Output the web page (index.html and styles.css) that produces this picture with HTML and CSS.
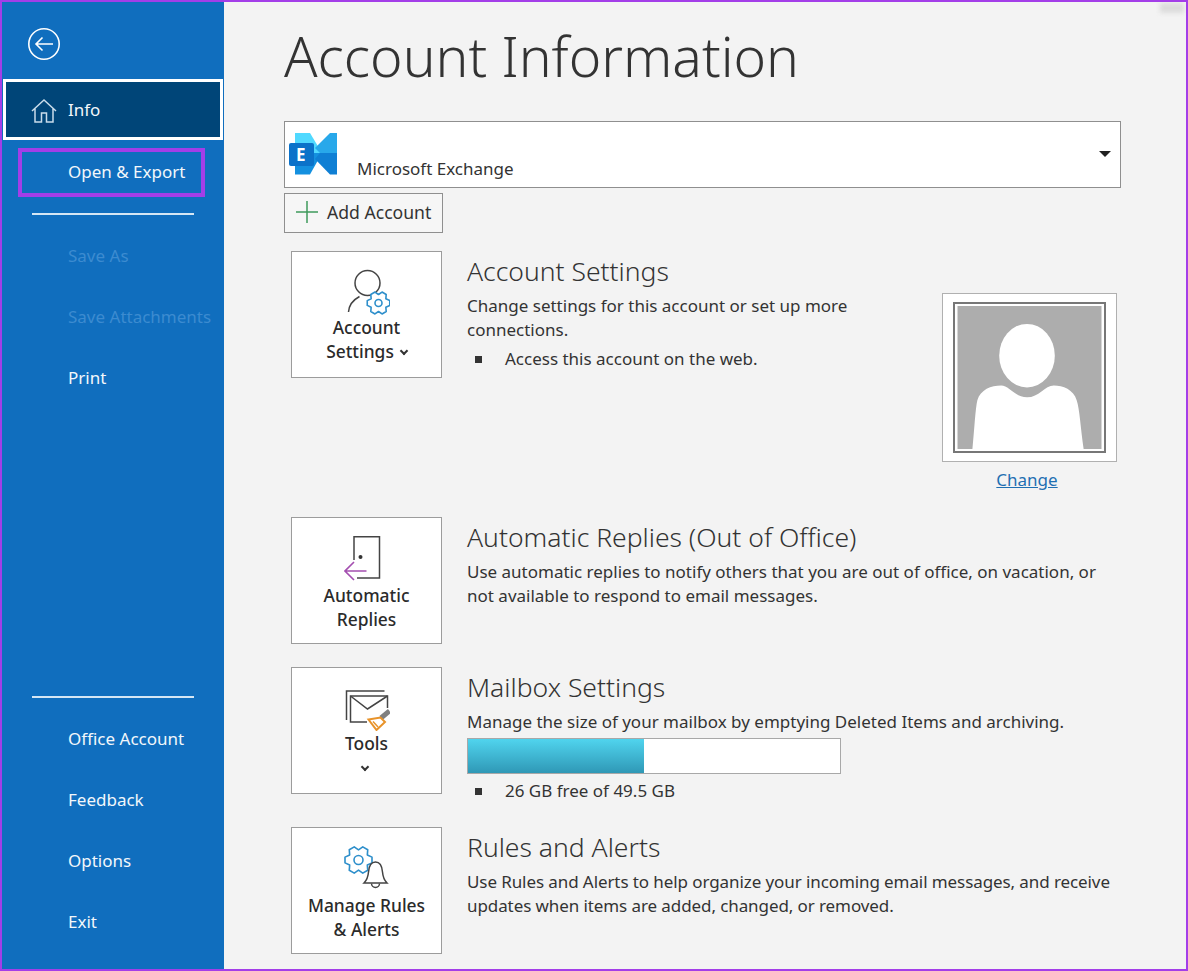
FILE: index.html
```html
<!DOCTYPE html>
<html lang="en">
<head>
    <meta charset="UTF-8">
    <meta name="viewport" content="width=device-width, initial-scale=1.0">
    <title>Account Information</title>
    <link rel="stylesheet" href="styles.css">
</head>
<body>
<div class="frame">
    <div class="side">
        <div class="back">
            <svg width="34" height="34" viewBox="0 0 34 34" fill="none" stroke="#fff" stroke-width="1.6">
                <circle cx="17" cy="17" r="15.2"/>
                <path d="M26 17H9M15.5 10.5L9 17l6.5 6.5"/>
            </svg>
        </div>
        <div class="item selected">
            <svg class="home" width="26" height="26" viewBox="0 0 26 26" fill="none" stroke="#c9dcea" stroke-width="1.5">
                <path d="M1 13L13 2l12 11M4 10.5V24h6.5v-9h5v9H22V10.5"/>
            </svg>
            Info
        </div>
        <div class="item open">Open &amp; Export</div>
        <div class="line"></div>
        <div class="item off">Save As</div>
        <div class="item off">Save Attachments</div>
        <div class="item">Print</div>
        <div class="spacer"></div>
        <div class="line"></div>
        <div class="item">Office Account</div>
        <div class="item">Feedback</div>
        <div class="item">Options</div>
        <div class="item">Exit</div>
    </div>

    <div class="main">
        <h1 class="title">Account Information</h1>

        <div class="account">
            <svg class="exch" width="48" height="44" viewBox="0 0 48 44">
                <path d="M6 1H21L33 21H6z" fill="#50d9ff"/>
                <path d="M6 21H33L21 42.500H6z" fill="#1490df"/>
                <path d="M41 1H48V21H31L26 16z" fill="#28a8ea"/>
                <path d="M31 21H48V42.500H41L26 27z" fill="#0f7fd4"/>
                <rect x="0" y="11" width="25" height="23" rx="2" fill="#0b72c9"/>
                <text x="7" y="28.500" class="e">E</text>
            </svg>
            <span class="acc-name">Microsoft Exchange</span>
            <span class="caret"></span>
        </div>

        <div class="add">
            <svg width="24" height="24" viewBox="0 0 24 24" stroke="#3f9a5c" stroke-width="1.5"><path d="M12 1v22M1 12h22"/></svg>
            Add Account
        </div>

        <div class="row row-account">
            <div class="btn">
                <svg class="icon icon-flush" width="46" height="46" viewBox="0 0 46 46" fill="none">
                    <circle cx="23.500" cy="14" r="12.500" stroke="#444" stroke-width="1.5"/>
                    <path d="M4.500 43C5 36 9 31 15.500 27.500" stroke="#444" stroke-width="1.5"/>
                    <path transform="translate(34.500 34)" d="M11.250-2.390L11.250 2.390 7.360 4.250 7.690 8.550 3.550 10.940 0 8.500-3.550 10.940-7.690 8.550-7.360 4.250-11.250 2.390-11.250-2.390-7.360-4.250-7.690-8.550-3.550-10.940 0-8.500 3.550-10.940 7.690-8.550 7.360-4.250Z" stroke="#2e8fcb" stroke-width="1.6" stroke-linejoin="round" fill="#fff"/>
                    <circle cx="34.500" cy="34" r="3.500" stroke="#2e8fcb" stroke-width="1.6"/>
                </svg>
                <span>Account</span>
                <span>Settings<i class="chev"></i></span>
            </div>
            <div class="info">
                <h2>Account Settings</h2>
                <p>Change settings for this account or set up more<br>connections.</p>
                <div class="bullet"><b></b>Access this account on the web.</div>
            </div>
            <div class="photo">
                <div class="pic">
                    <svg width="145" height="144" viewBox="0 0 145 144">
                        <rect width="145" height="144" fill="#adadad"/>
                        <ellipse cx="70" cy="50" rx="28" ry="32" fill="#fff"/>
                        <path d="M15 144c2-20 3-41 5-49 3-11 14-15 24-15 8 0 14 12 26 12s18-12 27-12c9 0 20 4 23 15 3 9 4 29 7 49z" fill="#fff"/>
                    </svg>
                </div>
                <a class="change">Change</a>
            </div>
        </div>

        <div class="row row-replies">
            <div class="btn">
                <svg class="icon" width="46" height="46" viewBox="0 0 46 46" fill="none">
                    <path d="M10 25V1.750H35.500V43H13" stroke="#444" stroke-width="1.5"/>
                    <circle cx="16.500" cy="22" r="2" fill="#333"/>
                    <path d="M22.500 36H1M10 27L1 36l9 9" stroke="#a44fb0" stroke-width="1.6"/>
                </svg>
                <span>Automatic</span>
                <span>Replies</span>
            </div>
            <div class="info">
                <h2>Automatic Replies (Out of Office)</h2>
                <p>Use automatic replies to notify others that you are out of office, on vacation, or<br>not available to respond to email messages.</p>
            </div>
        </div>

        <div class="row row-mailbox">
            <div class="btn">
                <svg class="icon icon-flush" width="46" height="46" viewBox="0 0 46 46" fill="none">
                    <path d="M2.500 35V6H40.500" stroke="#444" stroke-width="1.5"/>
                    <path d="M23 37H6.500V11H43.500V23" stroke="#444" stroke-width="1.5"/>
                    <path d="M6.500 11L23.500 24 43.500 11" stroke="#444" stroke-width="1.5"/>
                    <path d="M45.500 26L37 33" stroke="#808080" stroke-width="5"/>
                    <path d="M24.500 34.500L36.500 32.500 41 37 32.500 45z" fill="#fff" stroke="#e8932a" stroke-width="2"/>
                    <path d="M29 36.500L34 42" stroke="#e8932a" stroke-width="1.5"/>
                </svg>
                <span>Tools</span>
                <span class="chev-line"><i class="chev"></i></span>
            </div>
            <div class="info">
                <h2>Mailbox Settings</h2>
                <p>Manage the size of your mailbox by emptying Deleted Items and archiving.</p>
                <div class="bar"><div class="fill" style="width: 47.2%"></div></div>
                <div class="bullet bullet-free"><b></b>26 GB free of 49.5 GB</div>
            </div>
        </div>

        <div class="row row-rules">
            <div class="btn">
                <svg class="icon" width="46" height="46" viewBox="0 0 46 46" fill="none">
                    <path transform="translate(14.500 15) scale(1.200)" d="M11.250-2.390L11.250 2.390 7.360 4.250 7.690 8.550 3.550 10.940 0 8.500-3.550 10.940-7.690 8.550-7.360 4.250-11.250 2.390-11.250-2.390-7.360-4.250-7.690-8.550-3.550-10.940 0-8.500 3.550-10.940 7.690-8.550 7.360-4.250Z" stroke="#2e8fcb" stroke-width="1.350" stroke-linejoin="round"/>
                    <circle cx="14.500" cy="15" r="4.500" stroke="#2e8fcb" stroke-width="1.600"/>
                    <path d="M20 38c3-3 4-5 4.500-11 .5-6 3-10 7-10s6.500 4 7 10c.5 6 1.500 8 4.500 11z" stroke="#444" stroke-width="1.500" fill="#fff"/>
                    <path d="M27.500 38.500a4 4 0 0 0 8 0" stroke="#444" stroke-width="1.500"/>
                </svg>
                <span>Manage Rules</span>
                <span>&amp; Alerts</span>
            </div>
            <div class="info">
                <h2>Rules and Alerts</h2>
                <p class="tight">Use Rules and Alerts to help organize your incoming email messages, and receive<br>updates when items are added, changed, or removed.</p>
            </div>
        </div>
    </div>
    <div class="smudge"></div>
</div>
</body>
</html>
```

FILE: styles.css
```css
*{
    box-sizing: border-box;
}
body{
    margin: 0;
    font-family: "Noto Sans", "Open Sans", sans-serif;
    color: #333;
}
.frame{
    position: relative;
    width: 1188px;
    height: 971px;
    border: 2px solid #a33ee8;
    background: #f3f3f3;
    display: flex;
    overflow: hidden;
}

/* left menu */
.side{
    width: 222px;
    flex-shrink: 0;
    background: #106ebe;
    color: #f2f7fb;
    display: flex;
    flex-direction: column;
    padding-bottom: 17px;
    font-size: 17px;
}
.back{
    height: 77px;
    padding: 25px 0 0 25px;
}
.item{
    height: 61px;
    display: flex;
    align-items: center;
    padding-left: 66px;
    flex-shrink: 0;
}
.selected{
    position: relative;
    margin: 0 0 0 1px;
    padding-left: 62px;
    background: #004578;
    border: 3px solid #fff;
    width: 220px;
}
.home{
    position: absolute;
    left: 25px;
    top: 16px;
}
.open{
    height: 49px;
    margin: 8px 19px 6px 16px;
    padding: 0 0 3px 46px;
    border: 4px solid #a33ee8;
}
.line{
    height: 2px;
    margin: 10px 30px;
    background: #d5e6f4;
    flex-shrink: 0;
}
.off{
    color: #3c8bd0;
}
.spacer{
    flex: 1;
}

/* right side */
.main{
    flex: 1;
    padding: 0 65px 0 60px;
}
.title{
    margin: 17px 0 0 0;
    height: 82px;
    font-size: 55.200px;
    line-height: 74px;
    font-weight: 300;
    color: #333;
}
.account{
    margin-top: 20px;
    height: 67px;
    background: #fff;
    border: 1px solid #8f8f8f;
    display: flex;
    align-items: flex-start;
    padding: 10px 9px 0 4px;
}
.exch{
    flex-shrink: 0;
}
.e{
    font-size: 17px;
    font-weight: 700;
    fill: #fff;
}
.acc-name{
    margin: 25px 0 0 20px;
    font-size: 17px;
    flex: 1;
}
.caret{
    margin-top: 19px;
    border-left: 6px solid transparent;
    border-right: 6px solid transparent;
    border-top: 6px solid #222;
}
.add{
    margin-top: 5px;
    width: 159px;
    height: 40px;
    border: 1px solid #8f8f8f;
    background: #f6f6f6;
    display: flex;
    align-items: center;
    gap: 8px;
    padding: 0 0 2px 10px;
    font-size: 17.600px;
}
.row{
    display: flex;
    margin-left: 7px;
    align-items: flex-start;
}
.row-account{
    margin-top: 18px;
    height: 266px;
}
.row-replies{
    height: 150px;
}
.row-mailbox{
    height: 160px;
}
.btn{
    width: 151px;
    height: 127px;
    flex-shrink: 0;
    background: #fff;
    border: 1px solid #9c9c9c;
    display: flex;
    flex-direction: column;
    align-items: center;
    font-size: 17.400px;
    font-weight: 500;
    line-height: 24px;
    color: #2b2b2b;
    padding-top: 17px;
}
.icon{
    margin-bottom: 2px;
    flex-shrink: 0;
}
.icon-flush{
    margin-bottom: 0;
}
.chev{
    display: inline-block;
    width: 6px;
    height: 6px;
    border-right: 2px solid #333;
    border-bottom: 2px solid #333;
    transform: rotate(45deg);
    margin: 0 0 4px 7px;
}
.chev-line{
    margin-left: -11px;
}
.info{
    flex: 1;
    margin-left: 25px;
    font-size: 17px;
}
.info h2{
    margin: 2px 0 5px 0;
    height: 36px;
    font-size: 26.500px;
    line-height: 36px;
    font-weight: 300;
}
.info p{
    margin: 0;
    line-height: 24px;
}
.info .tight{
    letter-spacing: -0.09px;
}
.bullet{
    display: flex;
    align-items: center;
    margin-top: 5px;
    line-height: 24px;
}
.bullet b{
    width: 7px;
    height: 7px;
    background: #333;
    margin: 0 23px 0 8px;
}
.bar{
    margin-top: 4px;
    width: 374px;
    height: 36px;
    background: #fff;
    border: 1px solid #a8a8a8;
}
.fill{
    height: 100%;
    background: linear-gradient(#50d4ee, #2f98b6);
}
.bullet-free{
    margin-top: 5px;
}
.photo{
    width: 175px;
    margin: 42px 4px 0 0;
    display: flex;
    flex-direction: column;
    align-items: center;
}
.pic{
    width: 175px;
    height: 169px;
    background: #fff;
    border: 1px solid #b0b0b0;
    padding: 8px 10px;
}
.pic svg{
    display: block;
    width: 153px;
    height: 151px;
    border: 2px solid #777;
    padding: 2px;
    background: #fff;
}
.change{
    margin-top: 6px;
    margin-right: 5px;
    font-size: 17px;
    color: #1f6fb2;
    text-decoration: underline;
}
.smudge{
    position: absolute;
    right: 2px;
    top: 1px;
    width: 24px;
    height: 10px;
    background: #dcdcdc;
    filter: blur(2px);
}
```
